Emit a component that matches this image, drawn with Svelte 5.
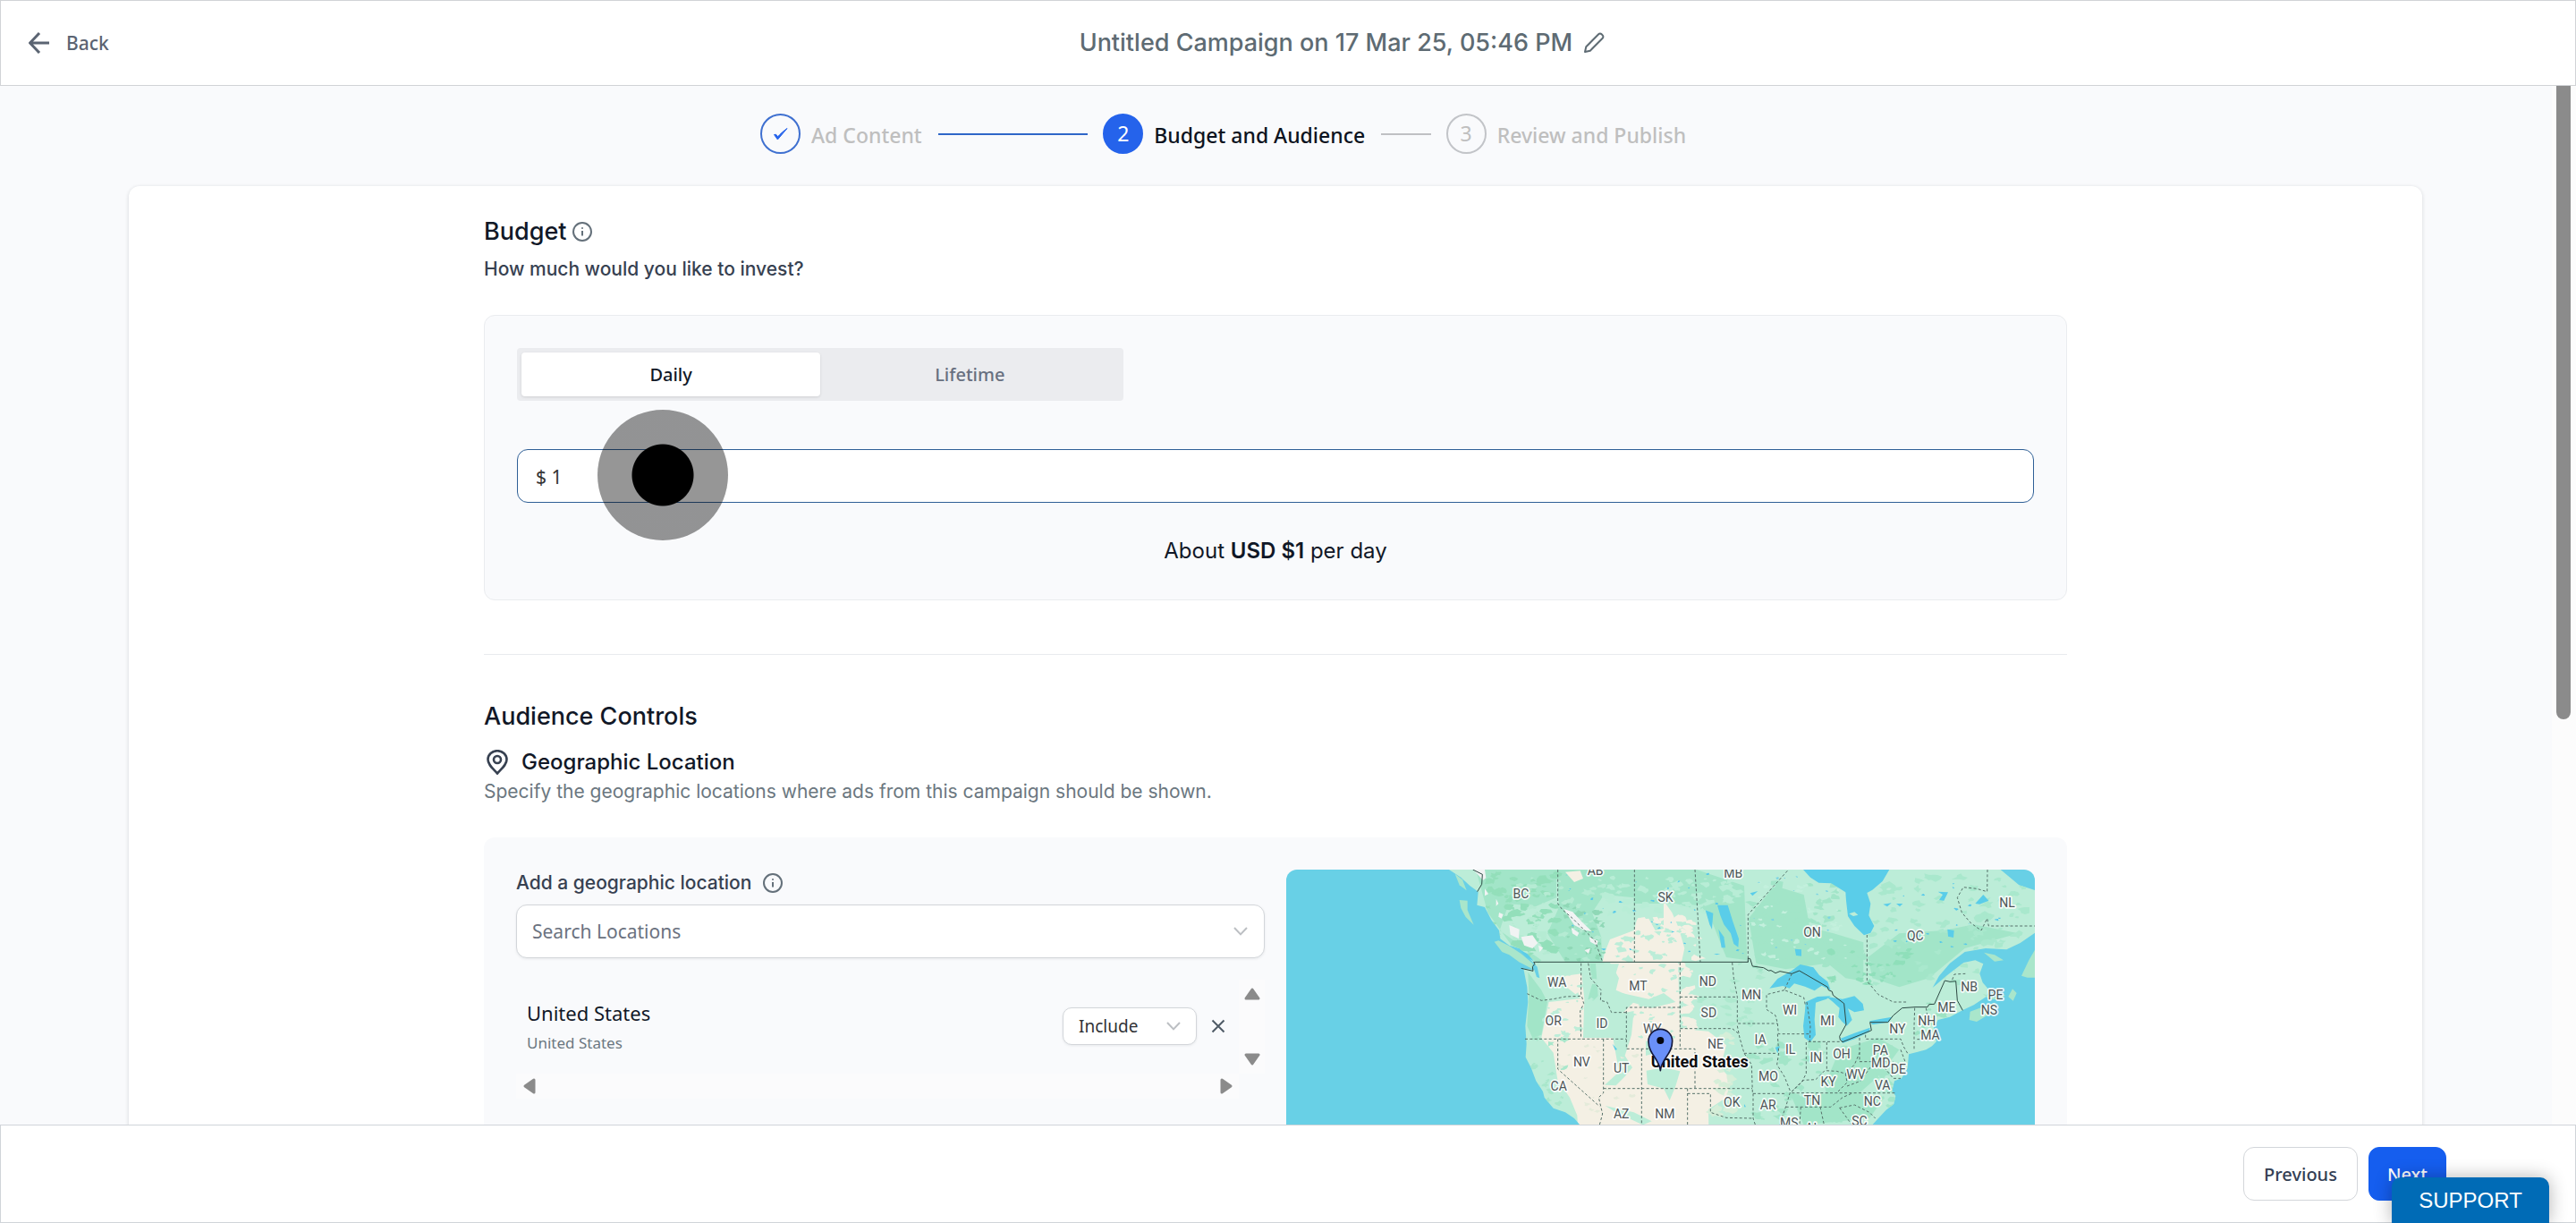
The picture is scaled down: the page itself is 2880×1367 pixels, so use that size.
<script>
  let budget = $state('$ 1');
  let period = $state('daily');
  let search = $state('');
  let rule = $state('include');

  const land =
    'M570 36L610 62L640 90L668 110L664 155L690 162L712 205L738 240L742 268L772 290L806 300L850 345L866 362L874 400L864 396L856 372L820 368L832 430L835 480L826 560L830 620L827 665L845 700L862 745L885 780L890 800L920 836L960 850L990 870L1012 895L1030 1386L1900 1386L1990 892L2012 868L2036 842L2062 822L2068 795L2056 778L2064 745L2088 736L2108 702L2112 655L2142 647L2170 640L2190 628L2205 612L2200 595L2196 565L2210 540L2250 530L2292 508L2330 490L2372 462L2382 440L2360 415L2350 385L2362 352L2335 340L2296 348L2244 388L2192 432L2214 392L2250 350L2300 312L2370 300L2440 304L2486 282L2535 248L2535 105L2482 88L2420 36Z';
  const islands = [
    'M605 138L632 140L632 172L653 221L626 195L610 165Z',
    'M590 50L615 70L629 106L605 88Z',
    'M722 278L736 274L772 292L812 318L852 352L848 368L805 346L772 322L748 312Z',
    'M2315 540L2318 512L2350 500L2400 482L2412 498L2384 520L2340 546Z',
    'M2446 462L2460 436L2474 450L2462 476Z',
    'M2360 452L2400 464L2436 456L2420 472L2380 470Z',
    'M2364 314L2400 322L2430 340L2400 344Z',
    'M2535 305L2515 340L2490 392L2510 398L2535 398Z'
  ];
  const bays = [
    'M1758 36L2047 36L2024 75L1990 104L1972 114L1984 150L1978 190L1996 225L1984 248L1962 256L1930 225L1908 192L1902 140L1900 112L1852 82L1810 80L1782 62Z'
  ];
  const dry = [
    'M1085 346L1092 315L1110 270L1150 255L1190 240L1200 205L1240 200L1262 240L1300 232L1320 262L1345 300L1342 346Z',
    'M1110 348L1338 348L1345 570L1440 578L1500 625L1480 700L1518 740L1500 800L1440 840L1450 1386L1030 1386L1000 860L975 800L934 740L920 650L880 600L905 480L1012 468L952 420L960 392L1015 385L1024 470L1020 600L1160 600L1150 520L1200 470L1130 440L1140 400Z',
    'M1290 140L1318 180L1340 230L1360 300L1350 346L1290 346Z',
    'M960 44L1010 40L1020 66L990 78Z'
  ];
  const forest = [
    'M660 36L930 36L930 130L860 160L770 150L740 240L880 340L870 350L780 290L700 180Z',
    'M930 36L1190 36L1190 130L1090 120L1050 180L1080 260L1085 346L960 346L900 250L940 160Z',
    'M835 380L880 440L900 480L880 590L850 600L832 560L838 460Z',
    'M1190 36L1400 36L1560 90L1570 340L1500 330L1440 180L1330 150L1190 150Z',
    'M1575 200L1660 90L1760 120L1780 230L1860 250L1960 280L1960 410L1900 400L1840 350L1700 370L1600 350Z',
    'M1975 330L2080 250L2230 240L2330 220L2480 250L2300 300L2180 400L2080 430L1990 400Z',
    'M1042 350L1090 350L1086 440L1062 478L1036 470L1050 420Z',
    'M1880 640L2010 600L2080 640L2020 720L1930 800L1850 860L1830 760Z',
    'M1720 800L1900 780L2030 800L1980 870L1760 892Z'
  ];
  const mint = [
    'M770 165L850 160L890 240L840 250L790 215Z',
    'M1062 352L1140 352L1118 420L1150 500L1112 520L1060 545L1030 500L1070 460Z',
    'M1140 520L1190 510L1182 590L1160 660L1185 700L1160 730L1130 760L1092 758L1140 715L1120 600Z',
    'M1232 710L1290 700L1345 712L1330 762L1310 810L1290 770L1236 756Z',
    'M1094 828L1190 850L1250 880L1220 892L1130 850Z',
    'M1150 450L1240 470L1290 450L1330 480L1250 500L1180 480Z',
    'M1230 610L1300 640L1230 660Z'
  ];
  const snow = [
    'M772 222L806 236L804 268L776 254Z', 'M812 262L850 256L868 282L850 300L822 290Z',
    'M690 100L702 118L690 124Z', 'M738 180L752 186L746 200L736 194Z', 'M728 134L736 150L728 158Z',
    'M955 168L985 178L1018 214L1050 244L1020 238L990 222Z', 'M980 230L1006 248L1000 260L984 250Z',
    'M1040 262L1070 275L1066 290L1044 278Z', 'M1024 306L1044 300L1038 318Z', 'M870 290L886 298L874 312Z',
    'M652 36L690 36L694 64L684 72Z'
  ];
  const lakes = [
    'M1645 434L1672 402L1718 376L1748 354L1792 364L1812 390L1840 412L1850 440L1820 425L1796 442L1764 428L1728 418L1712 434L1690 426Z',
    'M1766 480L1806 462L1850 460L1836 470L1800 482L1796 540L1800 590L1782 614L1762 600L1758 560L1764 510Z',
    'M1836 462L1890 470L1930 460L1958 486L1962 508L1930 514L1908 502L1922 540L1904 560L1888 545L1876 530L1880 500L1858 480Z',
    'M1884 602L1930 584L1982 566L1980 580L1930 604L1890 618Z',
    'M1980 544L2020 536L2056 530L2044 548L1990 556Z',
    'M1470 155L1505 155L1522 210L1542 268L1540 296L1525 285L1515 250L1492 220L1480 190Z',
    'M1474 236L1492 262L1497 298L1484 298Z', 'M1430 172L1456 182L1452 236L1444 220Z',
    'M1730 302L1752 304L1752 326L1734 324Z', 'M2210 110L2244 112L2230 140L2214 138L2226 120Z',
    'M2335 150L2362 120L2380 140L2350 152Z', 'M2026 152L2054 148L2040 160Z',
    'M2242 236L2264 240L2262 264L2244 260Z', 'M1118 620L1134 638L1128 642Z', 'M804 302L832 318L856 344L830 330Z',
    'M2070 150L2092 150L2082 160Z', 'M1580 115L1606 108L1588 124Z', 'M1458 318L1480 318L1468 322Z',
    'M1664 632L1680 628L1672 652Z', 'M1560 822L1566 832L1560 832Z'
  ];
  const dashed =
    'M935 36V150L950 170L985 200L1020 235L1060 275L1085 346M1192 36V346M1013 350V460M832 452L880 475L920 470L960 462L1015 460L1022 485L1010 510L1013 604M1037 350L1045 400L1080 440L1078 475L1100 480L1115 515H1165M1345 498H1165V637H1395V770M825 604H1165M935 604V705L1075 830M1088 604V785L1072 800L1085 855L1075 892M1216 637V1000M1088 770H1587M1345 348V637' +
    'M1395 36L1405 200L1413 346M1705 40L1573 187V346M1345 463H1535M1345 569H1520L1540 585M1520 348L1525 400L1537 463V552H1672M1560 652H1670M1537 560L1545 600L1560 652L1585 690L1588 785M1370 770V1000M1370 787H1447V850L1500 868L1590 870M1590 787V870L1600 900M1590 787H1700M1672 587L1676 650L1670 690L1695 730L1715 780L1700 830L1675 900M1695 440L1635 455V505L1665 525L1672 552L1675 587H1780M1720 385L1695 440L1760 465L1765 490M1768 615V720L1755 745L1720 780M1837 615V705M1775 613H1890M1720 780L1760 742L1800 740L1830 710L1870 712L1900 720L1930 690L1947 650M1947 600V680H2060M1967 590V604H2085L2095 630L2110 655M2085 640L2100 680M1900 720L1905 750L1875 780M1905 762L1950 745L1990 690M1720 785H2065M1700 832H1850L1890 800L1920 787M1880 835L1930 825L1980 850L2000 870M1750 832L1745 900M1815 832L1830 900M1880 835L1920 890M2132 500L2130 560V640M2170 500L2180 560M2140 605H2190M2030 700L2060 736H2085M1770 480L1782 560L1780 613M1972 255V410L2010 455L2060 480H2105M2376 36L2375 110L2340 100L2295 95L2275 130L2290 180L2320 215L2355 240L2375 200L2380 225H2535M2258 405L2265 387L2302 385';
  const solid =
    'M812 367L852 376L850 362L858 352L854 346H1573V333L1580 335L1588 360L1625 365L1642 375L1650 374L1665 383L1680 377L1720 385L1745 375L1840 430L1843 440L1855 445L1858 457L1895 485L1902 555L1880 595L1882 607L1890 614L1987 575L1982 548H2042L2060 525L2090 500L2133 497H2175L2180 488L2198 487L2233 408L2250 412L2270 410L2275 475L2293 508M650 36L682 52L680 85L665 110';
  const labels = [
    ['BC', 811, 117], ['AB', 1061, 38], ['SK', 1296, 129], ['WA', 932, 414], ['MT', 1204, 427], ['OR', 920, 543],
    ['ID', 1083, 551], ['WY', 1252, 570], ['NV', 1015, 680], ['UT', 1148, 702], ['CA', 938, 763], ['AZ', 1148, 856],
    ['NM', 1294, 856], ['MB', 1523, 47], ['ON', 1788, 247], ['QC', 2134, 257], ['NL', 2442, 147], ['ND', 1438, 410],
    ['MN', 1584, 456], ['SD', 1441, 515], ['WI', 1713, 508], ['MI', 1839, 543], ['NE', 1464, 621], ['IA', 1614, 606],
    ['IL', 1715, 640], ['IN', 1801, 666], ['OH', 1887, 653], ['PA', 2017, 643], ['MD', 2018, 685], ['DE', 2077, 704],
    ['WV', 1935, 722], ['KY', 1842, 747], ['VA', 2024, 758], ['MO', 1641, 730], ['OK', 1519, 817], ['AR', 1640, 824],
    ['TN', 1788, 811], ['NC', 1990, 814], ['SC', 1947, 878], ['MS', 1711, 884], ['AL', 1790, 902], ['NY', 2074, 571],
    ['NH', 2173, 543], ['MA', 2184, 592], ['ME', 2239, 497], ['NB', 2315, 428], ['PE', 2403, 455], ['NS', 2382, 508]
  ];

  // Seeded generator, so the terrain texture is the same on every render.
  let seed = 7;
  function rnd() {
    seed = (seed * 16807) % 2147483647;
    return seed / 2147483647;
  }
  function patches(x0, y0, x1, y1, count, size, color) {
    return Array.from({ length: count }, () => {
      const cx = x0 + rnd() * (x1 - x0);
      const cy = y0 + rnd() * (y1 - y0);
      const r = size * (0.4 + rnd());
      const points = Array.from({ length: 9 }, (_, i) => {
        const a = (i / 9) * Math.PI * 2;
        const k = r * (0.35 + rnd() * 0.9);
        return `${Math.round(cx + Math.cos(a) * k * 1.4)} ${Math.round(cy + Math.sin(a) * k * 0.8)}`;
      });
      return { d: `M${points.join('L')}Z`, color };
    });
  }
  const terrain = [
    ...patches(680, 40, 940, 340, 70, 14, '#93dfba'),
    ...patches(780, 60, 1090, 340, 50, 10, '#b5ebd3'),
    ...patches(950, 150, 1090, 345, 30, 9, '#8fd8b6'),
    ...patches(1090, 60, 1550, 200, 60, 12, '#b8edd6'),
    ...patches(1195, 200, 1420, 340, 30, 12, '#f4f0e4'),
    ...patches(1100, 240, 1350, 340, 26, 11, '#bcedd8'),
    ...patches(1110, 360, 1340, 600, 34, 8, '#bcedd8'),
    ...patches(890, 360, 1090, 600, 34, 9, '#bcedd8'),
    ...patches(840, 600, 960, 860, 24, 10, '#a8e7cb'),
    ...patches(930, 620, 1200, 880, 22, 7, '#e4ebda'),
    ...patches(1350, 350, 1385, 620, 34, 15, '#f4f0e4'),
    ...patches(1460, 580, 1530, 860, 20, 15, '#d5eed8'),
    ...patches(1400, 350, 1620, 560, 24, 12, '#aee9cf'),
    ...patches(1580, 80, 1960, 400, 70, 14, '#a2e5c8'),
    ...patches(1580, 80, 1960, 340, 40, 8, '#c3f0dd'),
    ...patches(1980, 60, 2500, 420, 90, 13, '#a9e8cd'),
    ...patches(1840, 300, 2160, 430, 30, 12, '#8fdfba'),
    ...patches(1580, 620, 2080, 880, 80, 13, '#a2e5c8'),
    ...patches(2120, 480, 2380, 620, 20, 10, '#9de3c3')
  ];
  const ponds = [
    ...patches(960, 40, 1560, 330, 34, 4, '#56c8ea'),
    ...patches(1590, 60, 1900, 330, 16, 4, '#7bd3e4'),
    ...patches(2000, 80, 2480, 300, 20, 4, '#56c8ea')
  ];
</script>

{#snippet info()}
  <svg class="info" viewBox="0 0 22 22" aria-hidden="true">
    <circle cx="11" cy="11" r="10" />
    <path d="M11 10v5.500M11 6.200v1.600" />
  </svg>
{/snippet}

{#snippet chevron()}
  <svg class="chevron" viewBox="0 0 16 10" aria-hidden="true"><path d="M1 1l7 7.400L15 1" /></svg>
{/snippet}

<div class="page">
  <header>
    <a class="back" href="#back">
      <svg viewBox="0 0 24 24" aria-hidden="true"><path d="M23 12H2M12 1L1.500 12L12 23" /></svg>
      Back
    </a>
    <div class="title">
      <h1>Untitled Campaign on 17 Mar 25, 05:46 PM</h1>
      <button class="edit" aria-label="Edit campaign name">
        <svg viewBox="0 0 24 24" aria-hidden="true">
          <path d="M2 22l1.300-5.800L17.200 2.300a2.400 2.400 0 0 1 3.400 0l1.100 1.100a2.400 2.400 0 0 1 0 3.400L7.800 20.700z" />
        </svg>
      </button>
    </div>
  </header>

  <div class="body">
    <main>
      <ol class="steps">
        <li class="done">
          <span class="dot">
            <svg viewBox="0 0 18 16" aria-hidden="true"><path d="M1.500 8.500L5.400 14L16 1.500C12 4.500 8.500 7.500 5.600 10.800L3.600 8.300z" /></svg>
          </span>
          <span class="step-name">Ad Content</span>
          <i></i>
        </li>
        <li class="current" aria-current="step">
          <span class="dot">2</span>
          <span class="step-name">Budget and Audience</span>
          <i></i>
        </li>
        <li>
          <span class="dot">3</span>
          <span class="step-name">Review and Publish</span>
        </li>
      </ol>

      <div class="card">
        <div class="column">
          <section>
            <h2>Budget {@render info()}</h2>
            <label class="question" for="budget">How much would you like to invest?</label>
            <div class="panel budget">
              <div class="segmented">
                <button class:active={period === 'daily'} onclick={() => (period = 'daily')}>Daily</button>
                <button class:active={period === 'lifetime'} onclick={() => (period = 'lifetime')}>Lifetime</button>
              </div>
              <div class="amount">
                <input id="budget" type="text" bind:value={budget} />
                <span class="pointer"></span>
              </div>
              <p class="estimate">About <b>USD $1</b> per day</p>
            </div>
          </section>

          <hr />

          <section>
            <h2>Audience Controls</h2>
            <h3>
              <svg class="place" viewBox="0 0 24 28" aria-hidden="true">
                <path d="M12 26.500C6.500 20.500 1.500 16.500 1.500 11a10.500 9.800 0 0 1 21 0c0 5.500-5 9.500-10.500 15.500z" />
                <circle cx="12" cy="11" r="4" />
              </svg>
              Geographic Location
            </h3>
            <p class="hint">Specify the geographic locations where ads from this campaign should be shown.</p>

            <div class="panel geo">
              <div class="picker">
                <label class="field-label" for="search">Add a geographic location {@render info()}</label>
                <div class="search">
                  <input id="search" type="text" placeholder="Search Locations" bind:value={search} />
                  {@render chevron()}
                </div>
                <div class="list">
                  <div class="row">
                    <div class="names">
                      <strong>United States</strong>
                      <small>United States</small>
                    </div>
                    <div class="rule">
                      <select aria-label="Location rule" bind:value={rule}>
                        <option value="include">Include</option>
                        <option value="exclude">Exclude</option>
                      </select>
                      {@render chevron()}
                    </div>
                    <button class="remove" aria-label="Remove United States">
                      <svg viewBox="0 0 16 16" aria-hidden="true"><path d="M1.500 1.500l13 13M14.500 1.500l-13 13" /></svg>
                    </button>
                  </div>
                  <div class="bar vertical">
                    <button aria-label="Scroll up"><svg viewBox="0 0 18 14"><path d="M9 2L16 12H2z" /></svg></button>
                    <button aria-label="Scroll down"><svg viewBox="0 0 18 14"><path d="M9 12L16 2H2z" /></svg></button>
                  </div>
                  <div class="bar horizontal">
                    <button aria-label="Scroll left"><svg viewBox="0 0 14 18"><path d="M2 9L12 2V16z" /></svg></button>
                    <button aria-label="Scroll right"><svg viewBox="0 0 14 18"><path d="M12 9L2 2V16z" /></svg></button>
                  </div>
                </div>
              </div>

              <svg class="map" viewBox="24 36 2511 1350" role="img" aria-label="Map of the United States">
                <defs><clipPath id="land"><path d={land} /></clipPath></defs>
                <rect x="24" y="36" width="2511" height="1350" fill="#68d0e6" />
                <path d={land} fill="#bcedd8" />
                {#each islands as d}<path {d} fill="#a9e6cb" />{/each}
                <g clip-path="url(#land)">
                  {#each forest as d}<path {d} fill="#a2e5c8" />{/each}
                  {#each dry as d}<path {d} fill="#f4f0e4" />{/each}
                  {#each mint as d}<path {d} fill="#bcedd8" />{/each}
                  {#each terrain as p}<path d={p.d} fill={p.color} />{/each}
                  {#each ponds as p}<path d={p.d} fill={p.color} />{/each}
                  {#each snow as d}<path {d} fill="#f1f3f3" />{/each}
                </g>
                {#each bays as d}<path {d} fill="#5acde9" />{/each}
                <path d="M1912 184L1930 178L1942 188L1926 192Z" fill="#bcedd8" />
                {#each lakes as d}<path {d} fill="#5acde9" />{/each}
                <path class="dashed" d={dashed} />
                <path class="solid" d={solid} />
                {#each labels as [name, x, y]}<text {x} y={y + 15}>{name}</text>{/each}
                <text class="country" x="1411" y="699">United States</text>
                <path class="pin" d="M1279 710C1275 670 1239 655 1239 611A40 40 0 0 1 1319 611C1319 655 1283 670 1279 710Z" />
                <circle cx="1279" cy="609" r="12" fill="#05060f" />
              </svg>
            </div>
          </section>
        </div>
      </div>
    </main>
    <div class="scrollbar"><span></span></div>
  </div>

  <footer>
    <button class="secondary">Previous</button>
    <button class="primary">Next</button>
  </footer>
  <button class="support">SUPPORT</button>
</div>

<style>
  :global(body) { margin: 0; }
  * { box-sizing: border-box; }
  button, input, select { font: inherit; color: inherit; margin: 0; padding: 0; border: 0; background: none; outline: 0; }
  svg { display: block; flex: none; fill: none; stroke: currentColor; }
  h1, h2, h3, p { margin: 0; font-weight: 500; }

  .page {
    display: flex;
    flex-direction: column;
    height: 100vh;
    overflow: hidden;
    position: relative;
    background: #f9fafc;
    color: #111827;
    font-family: Inter, "Liberation Sans", sans-serif;
  }

  header {
    display: flex;
    align-items: center;
    flex: none;
    height: 96px;
    padding-left: 31px;
    background: #fff;
    border: 1px solid #d1d3d6;
  }
  .back {
    display: flex;
    align-items: center;
    gap: 18px;
    color: #5b6472;
    text-decoration: none;
    font: 500 21px/30px "Noto Sans", sans-serif;
  }
  .back svg { width: 24px; height: 24px; stroke-width: 3; }
  .title {
    flex: 1;
    display: flex;
    align-items: center;
    justify-content: center;
    gap: 12px;
    color: #5e6b73;
  }
  h1 { font-size: 27px; line-height: 36px; }
  .edit svg { width: 24px; height: 24px; stroke-width: 2; stroke-linejoin: round; }

  .body { flex: 1; display: flex; min-height: 0; }
  main { flex: 1; min-width: 0; overflow: hidden; padding: 31px 145px 0 144px; }
  .scrollbar { width: 27px; background: #fcfcfc; padding: 0 6px 0 5px; }
  .scrollbar span { display: block; height: 61%; background: #8b8b8b; border-radius: 0 0 8px 8px; }

  .steps {
    display: grid;
    grid-template-columns: repeat(3, 1fr);
    width: 100%;
    max-width: 1152px;
    margin: 0 auto 36px;
    padding: 0 2px 0 0;
    list-style: none;
    font: 500 23px/45px "Noto Sans", sans-serif;
    color: #bfbfbf;
  }
  .steps li { display: flex; align-items: center; height: 45px; white-space: nowrap; }
  .step-name { padding-top: 3px; }
  .dot {
    display: flex;
    align-items: center;
    justify-content: center;
    flex: none;
    width: 45px;
    height: 45px;
    margin-right: 12px;
    border: 2px solid #c2c4c8;
    border-radius: 50%;
    font-weight: 400;
  }
  .dot svg { width: 18px; height: 16px; fill: #2563eb; stroke: #2563eb; }
  .steps i { flex: 1; height: 2px; margin: 0 17px 0 18px; background: #bfc0c3; }
  .done .dot { border-color: #3f70d0; }
  .done i { background: #2f66c8; }
  .current { color: #0d1320; }
  .current .dot { background: #2563eb; border-color: #2563eb; color: #fff; }

  .card {
    background: #fff;
    border-radius: 12px;
    padding: 33px 36px;
    box-shadow: 0 1px 4px rgba(16, 24, 40, 0.16);
  }
  .column { width: 100%; max-width: 1770px; margin: 0 auto; }

  h2 { display: flex; align-items: center; gap: 7px; font-size: 27px; line-height: 36px; }
  .info { width: 22px; height: 22px; color: #64707a; stroke-width: 2; }
  .question { display: block; margin: 9px 0 36px; font-size: 21px; line-height: 30px; font-weight: 500; color: #374151; }

  .panel { background: #f9fafc; border-radius: 12px; padding: 36px; }
  .budget { border: 1px solid #eaecef; }
  .segmented {
    display: grid;
    grid-template-columns: 1fr 1fr;
    width: 40%;
    height: 59px;
    padding: 5px;
    background: #ebecef;
    border-radius: 4px;
    font: 500 20px/30px "Noto Sans", sans-serif;
    color: #687080;
  }
  .segmented button { padding-top: 1px; }
  .segmented .active { background: #fff; color: #111827; border-radius: 4px; box-shadow: 0 1px 3px rgba(0, 0, 0, 0.12); }
  .amount { position: relative; margin: 54px 0 36px; }
  .amount input {
    display: block;
    width: 100%;
    height: 60px;
    padding: 2px 20px 0;
    background: #fff;
    border: 1px solid #2f5f96;
    border-radius: 12px;
    font: 400 21px/30px "Noto Sans", sans-serif;
    color: #333;
  }
  .pointer {
    position: absolute;
    left: 90px;
    top: -44px;
    width: 146px;
    height: 146px;
    border-radius: 50%;
    background: radial-gradient(circle, #000 34px, rgba(0, 0, 0, 0.41) 35px);
  }
  .estimate { font-size: 24px; line-height: 36px; font-weight: 400; text-align: center; }
  .estimate b { font-weight: 600; }

  hr { height: 1px; margin: 60px 0 51px; border: 0; background: #e9ebee; }
  h3 { display: flex; align-items: center; gap: 15px; margin-top: 17px; font-size: 24px; line-height: 32px; }
  .place { width: 24px; height: 28px; margin-left: 3px; color: #374151; stroke-width: 2.6; }
  .hint { margin: 2px 0 36px; font-size: 21px; line-height: 30px; font-weight: 400; color: #6b7780; }

  .geo { display: grid; grid-template-columns: 1fr 1fr; gap: 24px; }
  .field-label { display: flex; align-items: center; gap: 13px; margin-bottom: 9px; font-size: 21px; line-height: 30px; font-weight: 500; color: #374151; }
  .search, .rule {
    display: grid;
    align-items: center;
    background: #fff;
    border: 1px solid #d3d6da;
    border-radius: 12px;
    box-shadow: 0 1px 3px rgba(16, 24, 40, 0.08);
    font-family: "Noto Sans", sans-serif;
  }
  .search > *, .rule > * { grid-area: 1 / 1; }
  .search { height: 60px; font-size: 21px; }
  .search input { width: 100%; height: 58px; padding: 0 48px 0 17px; }
  .search input::placeholder { color: #6b7280; opacity: 1; }
  .chevron { width: 16px; height: 10px; justify-self: end; margin-right: 18px; pointer-events: none; color: #bcbfc3; stroke-width: 2; }
  .search .chevron, .rule .chevron { z-index: 1; }

  .list { display: grid; grid-template-columns: 1fr 29px; grid-template-rows: 105px 28px; margin-top: 24px; }
  .row { display: flex; align-items: center; padding: 0 15px 2px 12px; font-family: "Noto Sans", sans-serif; }
  .names { flex: 1; display: grid; gap: 6px; }
  .names strong { font-weight: 400; font-size: 22px; line-height: 32px; }
  .names small { font-size: 17px; line-height: 24px; color: #6b7780; }
  .rule { width: 150px; height: 42px; border-radius: 10px; font-size: 19px; color: #303236; }
  .rule select { appearance: none; width: 100%; height: 40px; padding: 0 40px 0 17px; }
  .rule .chevron { margin-right: 17px; }
  .remove { margin-left: 16px; color: #4f5b66; }
  .remove svg { width: 16px; height: 16px; stroke-width: 2; }

  .bar { display: flex; justify-content: space-between; align-items: center; background: #fbfbfc; color: #8b8b8b; }
  .vertical { flex-direction: column; padding: 9px 0; }
  .horizontal { padding: 0 7px 0 8px; }
  .bar svg { fill: currentColor; stroke-width: 3; stroke-linejoin: round; }
  .vertical svg { width: 18px; height: 14px; }
  .horizontal svg { width: 14px; height: 18px; }

  .map { width: 100%; border-radius: 12px; overflow: hidden; stroke: none; }
  .map text {
    font: 400 42px Roboto, sans-serif;
    text-anchor: middle;
    fill: #4d5557;
    stroke: #fff;
    stroke-opacity: 0.85;
    stroke-width: 10;
    stroke-linejoin: round;
    paint-order: stroke;
  }
  .map .country { font-weight: 700; font-size: 54px; fill: #0c0c0e; }
  .dashed, .solid { fill: none; stroke: #56716a; stroke-width: 3; }
  .dashed { stroke-dasharray: 9 7; }
  .solid { stroke: #2e4a44; }
  .pin { fill: #6a90f8; stroke: #14183a; stroke-width: 5; stroke-linejoin: round; }

  footer {
    display: flex;
    align-items: center;
    justify-content: flex-end;
    gap: 12px;
    flex: none;
    height: 110px;
    padding-right: 144px;
    background: #fff;
    border: 1px solid #d0d4d9;
    font: 500 20px/30px "Noto Sans", sans-serif;
  }
  footer button { height: 60px; padding: 2px 22px 0; border-radius: 12px; border: 1px solid #d3d6da; }
  .secondary { color: #344054; }
  footer .primary { padding: 2px 20px 0; background: #155eef; border-color: #155eef; color: #fff; }
  .support {
    position: absolute;
    right: 30px;
    bottom: 0;
    width: 176px;
    height: 51px;
    background: #006bb6;
    color: #fff;
    border-radius: 10px 10px 0 0;
    box-shadow: 0 0 20px rgba(0, 0, 0, 0.3);
    font: 24px/50px "Liberation Sans", Arial, sans-serif;
  }
</style>
